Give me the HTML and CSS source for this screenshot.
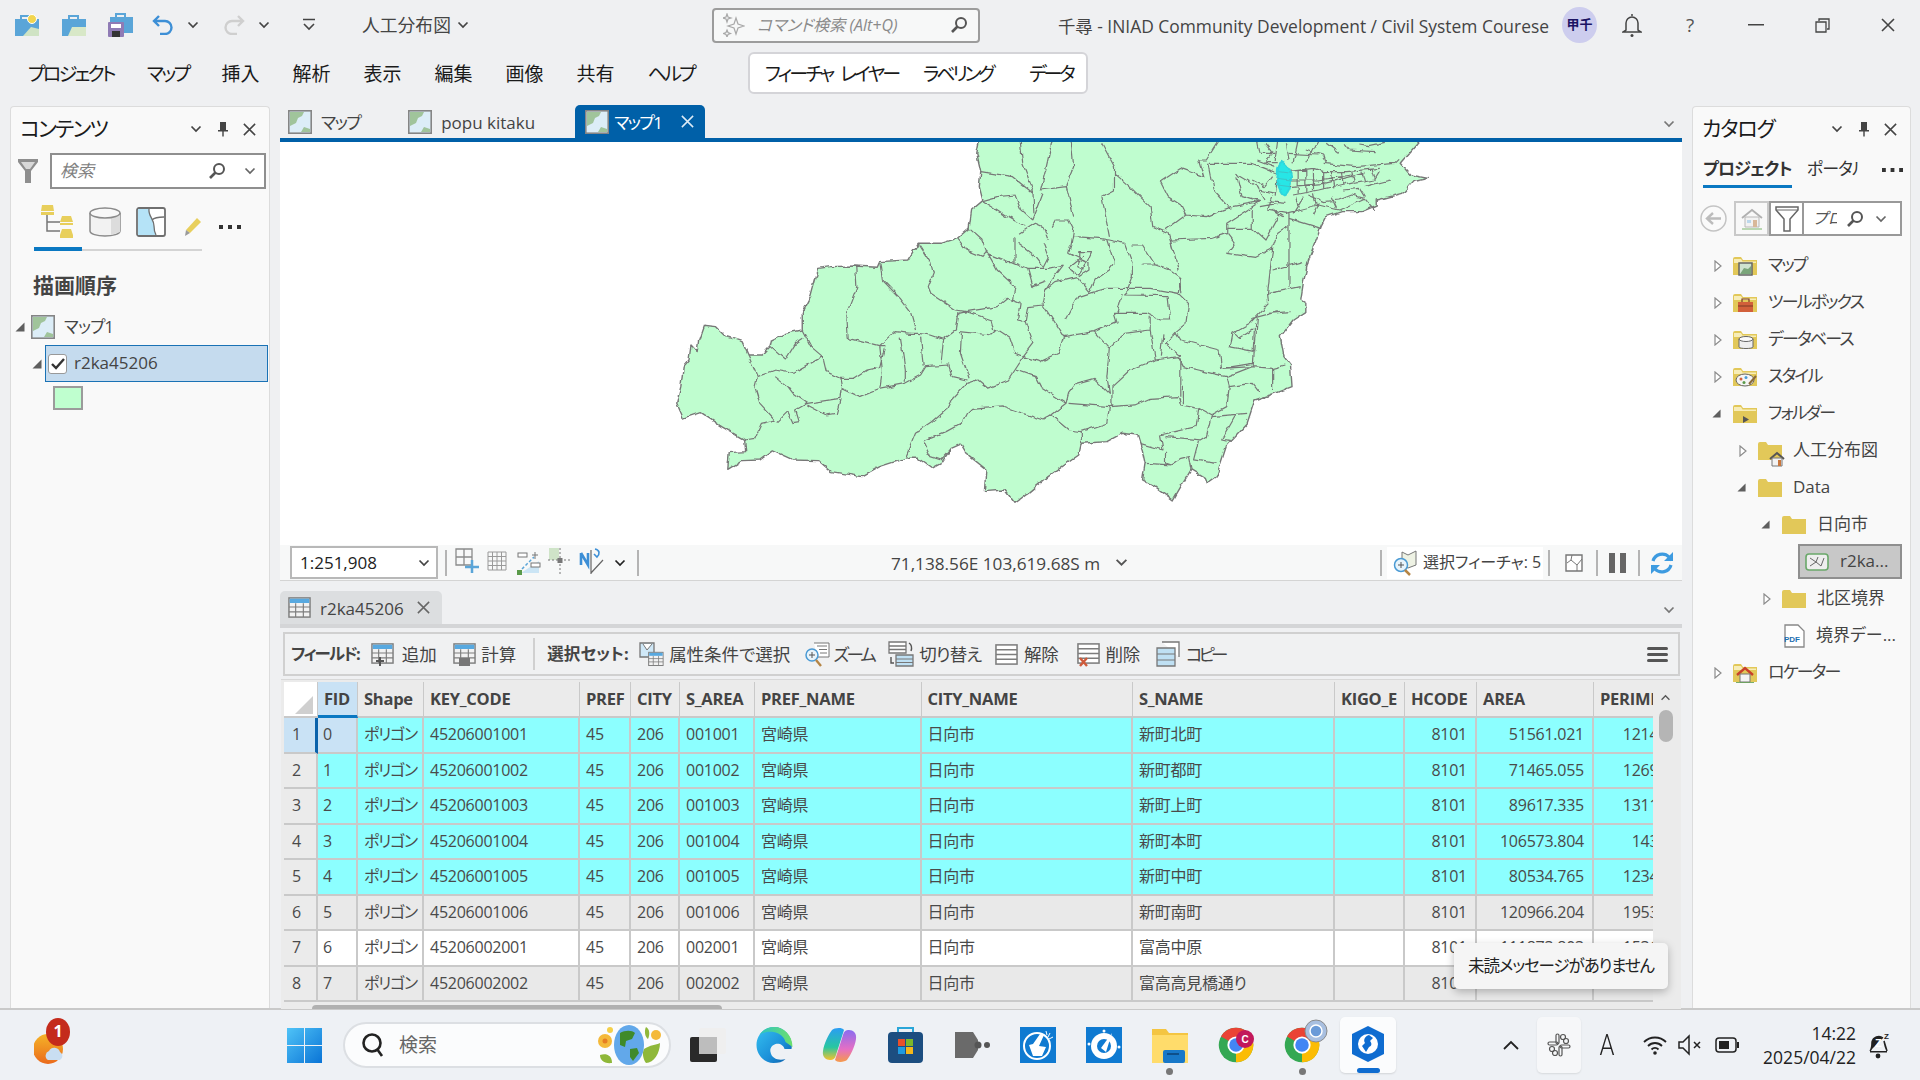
FILE: index.html
```html
<!DOCTYPE html>
<html lang="ja">
<head>
    <meta charset="utf-8">
    <title>ArcGIS Pro</title>
    <link rel="stylesheet" href="styles.css">
</head>
<body>
    <svg class="sprite" xmlns="http://www.w3.org/2000/svg">
        <defs>
            <linearGradient id="g-edge" x1="0" y1="0" x2="1" y2="1"><stop offset="0" stop-color="#35c1f1"/><stop offset=".6" stop-color="#1b8fd8"/><stop offset="1" stop-color="#0c59a4"/></linearGradient>
            <linearGradient id="g-edge2" x1="0" y1="0" x2="1" y2="0"><stop offset="0" stop-color="#2fc4c0"/><stop offset="1" stop-color="#6ce06c"/></linearGradient>
            <linearGradient id="g-win" x1="0" y1="0" x2="1" y2="1"><stop offset="0" stop-color="#4fc3f7"/><stop offset="1" stop-color="#0a74d6"/></linearGradient>
            <linearGradient id="g-co1" x1="0" y1="0" x2="0" y2="1"><stop offset="0" stop-color="#2a9df4"/><stop offset=".6" stop-color="#28c7a0"/><stop offset="1" stop-color="#f6c22c"/></linearGradient>
            <linearGradient id="g-co2" x1="0" y1="0" x2="0" y2="1"><stop offset="0" stop-color="#8a6cf0"/><stop offset=".6" stop-color="#e56fc4"/><stop offset="1" stop-color="#f59a4a"/></linearGradient>
            <linearGradient id="g-sun" x1="0" y1="0" x2="0" y2="1"><stop offset="0" stop-color="#f5b428"/><stop offset="1" stop-color="#ea6a1c"/></linearGradient>
            <filter id="wiggle" filterUnits="userSpaceOnUse" x="0" y="0" width="1402" height="403" color-interpolation-filters="sRGB"><feTurbulence type="fractalNoise" baseFrequency=".11" numOctaves="2" seed="4" result="n"/><feDisplacementMap in="SourceGraphic" in2="n" scale="5" xChannelSelector="R" yChannelSelector="G"/></filter>
        </defs>
        <symbol id="chev" viewBox="0 0 12 8"><path d="M1.5 1.5 6 6l4.5-4.5" fill="none" stroke="currentColor" stroke-width="1.7"/></symbol>
        <symbol id="x" viewBox="0 0 16 16"><path d="M2 2l12 12M14 2 2 14" fill="none" stroke="currentColor" stroke-width="1.6"/></symbol>
        <symbol id="pin" viewBox="0 0 12 16"><path d="M3 1h6v8H3zM1 9h10v1.4H1zM5.3 10h1.4v5.5H5.3z" fill="currentColor"/></symbol>
        <symbol id="mag" viewBox="0 0 18 18"><circle cx="11" cy="7" r="5" fill="none" stroke="currentColor" stroke-width="2"/><path d="M7.5 10.5 2 16" stroke="currentColor" stroke-width="2.6"/></symbol>
        <symbol id="tri-open" viewBox="0 0 10 10"><path d="M9.5.5v9h-9z" fill="#5f5f5f"/></symbol>
        <symbol id="tri-closed" viewBox="0 0 8 12"><path d="M1 1l6 5-6 5z" fill="#fff" stroke="#8c8c8c" stroke-width="1.2"/></symbol>
        <symbol id="map" viewBox="0 0 24 24"><rect x=".8" y=".8" width="22.4" height="22.4" fill="#dcedf7" stroke="#858585" stroke-width="1.6"/><path d="M2 2h14l-2 4-4 2-2 5-6 3z M13 22l3-5 3 1 3 1v3z" fill="#a0c49b"/></symbol>
        <symbol id="folder" viewBox="0 0 24 20"><path d="M0 3Q0 1 2 1h6l2 3h14v15H0z" fill="#e2c859"/><path d="M1 3h7l1.500 2.500H23V7H1z" fill="#f7edb8"/></symbol>
        <symbol id="plain-folder" viewBox="0 0 24 20"><path d="M0 3Q0 1 2 1h6l2 3h14v15H0z" fill="#e2c859"/></symbol>
        <symbol id="table" viewBox="0 0 24 24"><rect x="1" y="2" width="22" height="20" fill="#f2f2f2" stroke="#7d7d7d" stroke-width="1.500"/><rect x="1.800" y="2.800" width="20.400" height="4.500" fill="#58a9e0"/><path d="M1 11.500h22M1 16.500h22M8 7.500V22M16 7.500V22" stroke="#7d7d7d" stroke-width="1.200"/></symbol>
        <symbol id="rows" viewBox="0 0 24 24"><rect x="1" y="2" width="22" height="20" fill="#fff" stroke="#7d7d7d" stroke-width="1.600"/><path d="M1 7h22M1 12h22M1 17h22" stroke="#7d7d7d" stroke-width="1.500"/></symbol>
        <symbol id="dots" viewBox="0 0 22 4"><path d="M0 0h4v4H0zM9 0h4v4H9zM18 0h4v4h-4z" fill="#333"/></symbol>
        <symbol id="chrome" viewBox="0 0 48 48"><circle cx="24" cy="24" r="23" fill="#34a853"/><path d="M24 24 4 12.500A23 23 0 0 1 44 12.500z" fill="#ea4335"/><path d="M24 24 44 12.500A23 23 0 0 1 24 47z" fill="#fbbc04"/><circle cx="24" cy="24" r="11.500" fill="#fff"/><circle cx="24" cy="24" r="9" fill="#4285f4"/></symbol>
    </svg>

    <div class="window">
        <header class="titlebar">
            <div class="quick">
                <svg width="24" height="22" viewBox="0 0 24 22"><rect y="5" width="24" height="17" fill="#5aa5d8"/><path d="M6 5V2h8v3" fill="none" stroke="#5aa5d8" stroke-width="2"/><path d="M8 22l8-9 8 2v7z" fill="#cfe3c4"/><circle cx="17" cy="5" r="4.500" fill="#f2d54e" stroke="#fff"/></svg>
                <svg class="q-open" width="24" height="22" viewBox="0 0 24 22"><rect y="5" width="24" height="17" fill="#5aa5d8"/><path d="M7 5V2h9v3" fill="none" stroke="#5aa5d8" stroke-width="2"/><path d="M6 22l4-9h14v9z" fill="#d8e8c8"/></svg>
                <svg class="q-save" width="25" height="24" viewBox="0 0 25 24"><rect x="2" y="4" width="23" height="16" fill="#5aa5d8"/><path d="M8 4V1h9v3" fill="none" stroke="#5aa5d8" stroke-width="2"/><rect y="9" width="16" height="15" rx="1" fill="#8f7bb5"/><rect x="3" y="11" width="10" height="4" fill="#fff"/><rect x="4" y="18" width="8" height="6" fill="#333"/></svg>
                <svg class="q-undo" width="22" height="20" viewBox="0 0 22 20"><path d="M7 1 2 6l5 5M2 6h11a6.500 6.500 0 0 1 0 13H8" fill="none" stroke="#3d8fd6" stroke-width="2.400"/></svg>
                <svg class="q-chev" width="12" height="8"><use href="#chev"/></svg>
                <svg class="q-redo" width="22" height="20" viewBox="0 0 22 20"><path d="M15 1l5 5-5 5M20 6H9a6.500 6.500 0 0 0 0 13h5" fill="none" stroke="#cfcfcf" stroke-width="2.400"/></svg>
                <svg class="q-chev" width="12" height="8"><use href="#chev"/></svg>
                <svg class="q-custom" width="14" height="14" viewBox="0 0 14 14"><path d="M1 1.500h12M2 6l5 5 5-5" fill="none" stroke="#444" stroke-width="1.600"/></svg>
            </div>
            <div class="project-name">人工分布図</div>
            <svg class="q-name-chev" width="12" height="8"><use href="#chev"/></svg>
            <div class="command">
                <svg width="22" height="24" viewBox="0 0 22 24"><path d="M13 5l2 6 6 2-6 2-2 6-2-6-6-2 6-2zM4 1l1 3 3 1-3 1-1 3-1-3-3-1 3-1zM4 17l1 2.500 2.500 1-2.500 1L4 24l-1-2.500-2.500-1 2.500-1z" fill="none" stroke="#a8a8a8" stroke-width="1.200"/></svg>
                <span class="command-text">コマンド検索 (Alt+Q)</span>
                <svg class="command-mag" width="18" height="18"><use href="#mag"/></svg>
            </div>
            <div class="app-title">千尋 - INIAD Community Development / Civil System Courese</div>
            <div class="avatar">甲千</div>
            <svg class="win-bell" width="20" height="24" viewBox="0 0 20 24"><path d="M10 1v2M4 17V10a6 6 0 0 1 12 0v7l3 2H1z" fill="none" stroke="#444" stroke-width="1.500"/><circle cx="10" cy="22.500" r="1.500" fill="#444"/></svg>
            <div class="help">?</div>
            <svg class="win-min" width="16" height="2"><rect width="16" height="1.500" fill="#444"/></svg>
            <svg class="win-max" width="15" height="15" viewBox="0 0 15 15"><path d="M4 3V1h10v10h-2M1 4h10v10H1z" fill="none" stroke="#444" stroke-width="1.300"/></svg>
            <svg class="win-close" width="16" height="16"><use href="#x"/></svg>
        </header>

        <nav class="ribbon">
            <span class="kn">プロジェクト</span><span class="kn">マップ</span><span>挿入</span><span>解析</span><span>表示</span><span>編集</span><span>画像</span><span>共有</span><span class="kn">ヘルプ</span>
            <div class="context-tabs"><span class="kn ct1">フィーチャ レイヤー</span><span class="kn ct2">ラベリング</span><span class="kn ct3">データ</span></div>
        </nav>

        <div class="workspace">
            <aside class="panel contents">
                <div class="panel-head">
                    <span class="panel-title">コンテンツ</span>
                    <svg class="ph-chev" width="12" height="8"><use href="#chev"/></svg>
                    <svg class="ph-pin" width="12" height="16"><use href="#pin"/></svg>
                    <svg class="ph-x" width="15" height="15"><use href="#x"/></svg>
                </div>
                <div class="filter-row">
                    <svg width="20" height="24" viewBox="0 0 20 24"><path d="M0 0h20v3l-7 9v12H7V12L0 3z" fill="#8e8e8e"/><path d="M3 3h14l-5 7H8z" fill="#d8d8d8"/></svg>
                    <div class="search-box">
                        <span class="search-text">検索</span>
                        <svg class="sb-mag" width="18" height="18"><use href="#mag"/></svg>
                        <svg class="sb-chev" width="12" height="8"><use href="#chev"/></svg>
                    </div>
                </div>
                <div class="view-icons">
                    <svg width="34" height="33" viewBox="0 0 34 33"><path d="M7 8v18h13M7 17h13" fill="none" stroke="#777" stroke-width="1.500"/><path d="M2 0h11l1 6H1zM1 7h13v3H1z" fill="#e8cf5c"/><path d="M22 11h9l2 6H20zM20 18h13v2H20zM22 24h9l2 6H20zM20 30h13v3H20z" fill="#e8cf5c"/></svg>
                    <svg width="32" height="30" viewBox="0 0 32 30"><path d="M1 6v18c0 3 7 5 15 5s15-2 15-5V6" fill="#f2f2f2" stroke="#8a8a8a" stroke-width="1.500"/><path d="M22 10v18l9-3V6z" fill="#dcdcdc"/><ellipse cx="16" cy="6" rx="15" ry="5" fill="#f8f8f8" stroke="#8a8a8a" stroke-width="1.500"/></svg>
                    <svg width="30" height="30" viewBox="0 0 30 30"><rect x="1" y="1" width="28" height="28" rx="2" fill="#fff" stroke="#6f6f6f" stroke-width="1.800"/><path d="M2 2h11c-1 7 5 10 5 17 0 4 1 7 2 9H2z" fill="#b5e3f7"/><path d="M13 2c-1 7 5 10 5 17 0 4 1 7 2 9M16 13c3-3 8-3 12-3" fill="none" stroke="#6f6f6f" stroke-width="1.300"/></svg>
                    <svg class="vi-pencil" width="16" height="18" viewBox="0 0 16 18"><path d="M12 0l4 4L5 15l-4-3z" fill="#e8cf5c"/><path d="M1 12l4 3-5 3z" fill="#9a9a9a"/></svg>
                    <svg class="vi-dots" width="22" height="4"><use href="#dots"/></svg>
                </div>
                <div class="view-tabs"><div class="view-tabs-on"></div></div>
                <h2 class="drawing-order">描画順序</h2>
                <div class="toc-row">
                    <svg class="toc-tri" width="10" height="10"><use href="#tri-open"/></svg>
                    <svg class="toc-map" width="24" height="24"><use href="#map"/></svg>
                    <span>マップ1</span>
                </div>
                <div class="toc-row layer-row">
                    <svg class="layer-tri" width="10" height="10"><use href="#tri-open"/></svg>
                    <div class="layer-box">
                        <div class="check"><svg width="14" height="12" viewBox="0 0 14 12"><path d="M1 6l4 4 8-9" fill="none" stroke="#333" stroke-width="2.400"/></svg></div>
                        <span>r2ka45206</span>
                    </div>
                </div>
                <div class="layer-symbol"></div>
            </aside>

            <main class="center">
                <div class="doc-tabs">
                    <div class="doc-tab"><svg width="24" height="24"><use href="#map"/></svg><span class="kn">マップ</span></div>
                    <div class="doc-tab tab-popu"><svg width="24" height="24"><use href="#map"/></svg><span>popu kitaku</span></div>
                    <div class="doc-tab tab-active"><svg width="24" height="24"><use href="#map"/></svg><span class="kn">マップ1</span><svg class="tab-x" width="15" height="15"><use href="#x"/></svg></div>
                    <svg class="tabs-chev" width="12" height="8"><use href="#chev"/></svg>
                </div>

                <div class="map-view">
                    <svg class="map-svg" viewBox="0 0 1402 403">
                        <g filter="url(#wiggle)">
                        <g transform="translate(360 -12) scale(.5102 .3333)">
                            <path class="land" d="M665 30 660 70 668 125 665 170 672 212 650 240 645 295 622 325 590 340 545 340 525 390 470 395 465 412 420 408 375 410 350 415 335 500 318 550 318 600 285 610 258 630 255 650 240 675 212 675 200 635 170 620 150 590 125 586 115 630 112 665 100 645 96 690 85 710 80 770 72 820 85 865 118 848 160 890 205 930 207 965 175 968 172 1018 200 992 235 990 260 962 300 990 350 992 375 1025 435 1040 470 1010 520 985 545 985 572 1015 590 1000 610 955 630 942 645 980 678 1020 675 1085 715 1080 735 1120 765 1085 800 1040 860 975 865 940 915 935 945 910 975 915 985 965 990 1000 985 1050 1010 1070 1045 1110 1060 1070 1080 1020 1108 1045 1112 1060 1130 1040 1150 945 1190 880 1205 810 1235 795 1278 770 1275 705 1262 680 1255 620 1270 590 1280 570 1305 545 1305 520 1295 510 1300 460 1310 390 1335 290 1345 260 1375 245 1415 245 1445 225 1445 210 1495 190 1515 155 1545 145 1510 135 1490 100 1530 30z"/>
                            <path class="borders" d="M745 30 750 100 770 180 772 250M808 30 795 120 785 180M845 30 850 110 835 165 850 260M905 40 930 110 930 180 905 200 920 320M668 125 730 140 770 190M672 212 700 200 735 195 745 235 770 270M672 212 720 260 755 290M785 180 835 170M770 270 790 190M930 130 960 170 1000 230 1005 290 1035 310 1045 360 1055 420M1135 30 1110 90 1095 90 1105 140 1060 115 1020 155 1035 200 1060 225 1070 255 1030 300M1110 100 1200 100 1250 130M1115 100 1125 180 1160 240M1070 255 1110 260 1160 230 1215 215M1040 330 1120 325 1150 310 1165 340 1150 370 1205 382 1240 355M1215 215 1150 280 1150 310M1150 295 1200 295 1225 330 1250 260M1240 355 1230 490 1232 520 1195 580 1160 610 1155 650 1205 665M1272 250V470M1272 265 1335 295M1240 420 1300 395M1232 490 1295 470M1232 550 1275 545M1205 580 1200 710 1140 715 1135 660 1060 630 1050 605 1070 580 1075 520 1055 490 1060 440M1040 330 1045 360M645 295 670 330 680 370 720 395 730 395 760 415 800 415 830 405M622 325 640 360 672 380 680 365 700 420 735 470 730 510 745 520 720 505 700 530 640 545M545 340 570 400 575 430 565 470 570 490 620 540 640 545M470 395 475 450 510 505 530 545 540 600M423 410 425 470 405 550 408 625 470 650M318 600 335 650 358 680 365 725 392 745 420 745 445 720 470 712 480 650 470 650 500 605 530 610 545 610 570 615 595 628 620 600 625 550 640 545M212 675 230 740 265 720 300 730 358 680M255 650 285 690 305 640 320 625M230 740 225 770 235 820 265 870 238 880 225 925 205 930M265 740 290 770 300 790 328 820 392 805 395 770 392 745M328 820 305 840 312 875 300 878 290 845 270 875M328 825 365 855 385 850 392 810M395 775 430 800 470 775 520 760 550 735 560 710 605 705 612 740 640 750M470 650 475 720 470 775M510 620 520 720 520 755M550 620 555 710M595 628 590 700M630 610 628 670 645 745M625 605 690 615 700 600 725 625 735 670 752 680 735 720 722 750 690 770 680 775 660 750 640 760 610 810 600 840 570 880 540 910 520 985M640 545 690 570 695 600M755 575 770 640 750 680 785 695 820 670 830 620M745 520 740 570 755 575 760 530 790 525 795 480 815 455 855 440 880 485M790 525 830 620 890 605 920 655 915 740 920 790 890 745 855 760 840 790 835 820 785 770 775 740 738 720M880 490 915 475 1000 475 1055 490M835 570 860 500 880 490M890 605 935 575 930 550 995 550 1020 570 1040 570 1035 500M960 480 950 495 1035 497M945 495 935 550M920 655 950 610 1000 600 1010 690 960 720 925 770 925 830M1000 600V560M1010 690 1055 680 1065 710 1150 740 1155 770 1150 830 1120 855 1095 835 1060 825 1055 800 1000 805 970 825 920 830 840 820M1060 685V800M1065 770V820M1025 610 1020 680M1050 605 1030 640 1060 680M1135 660 1140 715 1200 700M1150 740 1200 710 1240 715 1265 705M1155 770 1200 760 1215 790M1240 715V780M640 850 650 835 710 828 750 850 790 870 805 855 835 820M640 850 630 880 600 905 555 932 570 980 590 990 610 955M805 855 840 900 865 905 915 880 920 830M865 905V940M1095 835 1090 890 1020 915 1025 960 980 940M1120 855 1110 920 1100 930 1030 920M1170 850 1140 930 1155 935M1120 860 1190 850M1095 930 1085 990 1130 1000M1030 965 1030 1000 1040 1005 1060 985 1075 980 1080 1020M990 1000 1040 1005M735 320V400M740 340 775 380 790 410 800 380 790 340M745 310 775 280 790 290 800 330M808 290 815 270 840 270 850 300 845 345 840 370M850 320 900 325 920 330 950 340 965 400 965 440 955 480M840 370 880 400 880 420 860 440M915 330 930 400 920 420 890 450 880 485M965 345 985 345 1010 405 1040 420 1058 440 1060 490M985 405H1015M760 415 770 470 795 455M830 405 810 445 795 480M860 365H885L875 400 860 435 840 415 860 390zM868 375 858 410 870 420M1210 565 1205 665M1165 610 1175 625 1200 600M1240 355 1250 310 1270 290M1200 240V300M1200 565 1250 545M1250 30 1245 90M1290 30 1280 100M1330 30 1305 100M1210 30 1215 70 1245 70M1410 45 1430 50 1460 40M1340 100 1400 110 1480 100 1490 85M1165 130 1210 170 1225 210M1170 140 1180 200 1215 215M1270 125 1320 115 1340 125 1385 125 1450 115M1275 150 1330 150 1395 135M1275 170 1340 160 1420 130M1280 195 1330 180 1400 155M1290 120V190M1305 115V190M1320 115V180M1340 125V175M1355 125 1360 175M1375 125 1378 165M1395 125 1400 155M1415 125 1420 155M1435 118 1440 145M1240 200 1230 240 1265 250 1330 225 1370 240 1420 205 1395 195 1370 210 1340 215 1310 195M1285 200 1290 230M1320 190 1325 225M1355 200 1365 235M1230 215 1265 220M1250 130 1245 200M1225 40 1240 70 1225 95 1250 95M1265 40 1270 90M1305 60 1340 75 1345 100M1345 40 1370 70M1380 40 1390 60 1440 65M1210 90 1245 110M1270 70 1330 75M1200 150 1225 170 1240 140M1215 180 1245 190M1400 160 1440 150 1450 125M1420 170 1470 150M1380 180 1410 175 1420 200M1420 205 1440 240M1330 225 1320 255M1300 200 1280 250M1215 230 1250 220M1240 240 1260 260"/>
                            <path class="selected" d="M1258 95C1268 100 1275 120 1276 140 1277 165 1272 190 1264 196 1255 190 1247 160 1250 130 1250 110 1252 100 1258 95z"/>
                            <path class="selected-lines" d="M1252 125 1276 130M1250 145 1276 150M1250 165 1274 170"/>
                        </g>
                        </g>
                    </svg>
                </div>

                <div class="map-status">
                    <div class="scale-box"><span>1:251,908</span><svg width="12" height="8"><use href="#chev"/></svg></div>
                    <div class="ms-sep"></div>
                    <svg class="ms-i1" width="24" height="26" viewBox="0 0 24 26"><path d="M1 1h16v16H1zM1 9h16M9 1v16" fill="none" stroke="#8a8a8a" stroke-width="1.300"/><path d="M17 12v13M10 19h14" stroke="#5aa5d8" stroke-width="2.500"/></svg>
                    <svg class="ms-i2" width="20" height="20" viewBox="0 0 20 20"><path d="M1 1h18v18H1zM1 5.500h18M1 10h18M1 14.500h18M5.500 1v18M10 1v18M14.500 1v18" fill="none" stroke="#9a9a9a" stroke-width="1"/></svg>
                    <svg class="ms-i3" width="24" height="24" viewBox="0 0 24 24"><path d="M4 22 22 10v12z" fill="#cbe5f5"/><path d="M5 18 17 6" stroke="#5aa5d8" stroke-width="1.500" stroke-dasharray="3 2"/><rect y="19" width="5" height="5" fill="#5a9a4a"/><rect x="1" y="2" width="9" height="4" fill="#fff" stroke="#777"/><rect x="14" y="12" width="9" height="4" fill="#fff" stroke="#777"/><path d="M18 1v7M15 4h6" stroke="#777"/></svg>
                    <svg class="ms-i4" width="24" height="26" viewBox="0 0 24 26"><rect x="1" y="0" width="10" height="12" fill="#cfe4c8"/><path d="M0 12h24M12 0v26" stroke="#777" stroke-dasharray="2 2"/><rect x="9.500" y="10" width="5" height="5" fill="#777"/></svg>
                    <svg class="ms-i5" width="25" height="26" viewBox="0 0 25 26"><path d="M2 5v12M2 5l7 12V5" fill="none" stroke="#3d8fd6" stroke-width="2.600"/><path d="M12 2v24M12 25 24 12" stroke="#666" stroke-width="1.200"/><path d="M16 1c5 1 5 5 2 8l-3-3" fill="none" stroke="#3d8fd6" stroke-width="1.600"/></svg>
                    <svg class="ms-chev" width="12" height="8"><use href="#chev"/></svg>
                    <div class="ms-sep ms-sep2"></div>
                    <span class="coords">71,138.56E 103,619.68S m</span>
                    <svg class="coords-chev" width="13" height="9"><use href="#chev"/></svg>
                    <div class="ms-sep ms-sep3"></div>
                    <div class="selected-count">
                        <svg width="24" height="26" viewBox="0 0 24 26"><path d="M9 2l6 3 8-4v14l-8 3-6-3z" fill="#eef2e4" stroke="#777"/><circle cx="8" cy="15" r="6.500" fill="#e8f4fb" stroke="#4a9ad4" stroke-width="1.500"/><path d="M5 15h6M8 12v6" stroke="#555"/><path d="M12 20l5 5" stroke="#b58545" stroke-width="2.500"/></svg>
                        <span>選択フィーチャ: 5</span>
                    </div>
                    <div class="ms-sep ms-sep4"></div>
                    <svg class="ms-i6" width="18" height="18" viewBox="0 0 18 18"><path d="M1 1h16v16H1z" fill="#fff" stroke="#777" stroke-width="1.400"/><path d="M7 1 6 6l6 5v6M6 6 2 9M12 11l5-6" fill="none" stroke="#777"/></svg>
                    <div class="ms-sep ms-sep5"></div>
                    <svg class="ms-pause" width="17" height="20"><rect width="6" height="20" fill="#666"/><rect x="11" width="6" height="20" fill="#666"/></svg>
                    <div class="ms-sep ms-sep6"></div>
                    <svg class="ms-refresh" width="24" height="24" viewBox="0 0 24 24"><path d="M3 10a9.500 9.500 0 0 1 16-4l3 3M21 14a9.500 9.500 0 0 1-16 4l-3-3" fill="none" stroke="#3d9be0" stroke-width="3.200"/><path d="M23 1v9h-9zM1 23v-9h9z" fill="#3d9be0"/></svg>
                </div>

                <div class="table-tabs">
                    <div class="table-tab"><svg width="23" height="23"><use href="#table"/></svg><span>r2ka45206</span><svg class="tab-x" width="15" height="15"><use href="#x"/></svg></div>
                    <svg class="tabs-chev" width="12" height="8"><use href="#chev"/></svg>
                </div>

                <div class="table-tools">
                    <b class="kn">フィールド:</b>
                    <svg class="tt-i1" width="23" height="25"><use href="#table" width="23" height="23"/><path d="M5 19h8M9 15v9" stroke="#555" stroke-width="2"/></svg><span class="tt-add">追加</span>
                    <svg class="tt-i2" width="23" height="25"><use href="#table" width="23" height="23"/><rect x="6" y="16" width="11" height="8" fill="#777"/></svg><span>計算</span>
                    <div class="tt-sep"></div>
                    <b>選択セット:</b>
                    <svg class="tt-i3" width="25" height="25" viewBox="0 0 25 25"><path d="M1 1h14v14H1z" fill="#cfe8f7" stroke="#777" stroke-width="1.300"/><path d="M4 2l4 6 5-6" fill="#fff" stroke="#777"/><g transform="translate(9 9) scale(.66)"><use href="#table" width="24" height="24"/></g></svg><span>属性条件で選択</span>
                    <svg class="tt-i4" width="25" height="25" viewBox="0 0 25 25"><path d="M9 1h15v14H12" fill="#fff" stroke="#777"/><path d="M12 4h10M14 7.500h8M15 11h7" stroke="#777"/><circle cx="7" cy="13" r="6" fill="#e8f4fb" stroke="#4a9ad4" stroke-width="1.500"/><path d="M4 13h6M7 10v6" stroke="#555"/><path d="M11 18l5 6" stroke="#b58545" stroke-width="2.400"/></svg><span class="kn tt-zoom">ズーム</span>
                    <svg class="tt-i5" width="26" height="26" viewBox="0 0 26 26"><path d="M1 1h17v11H1zM1 5h17M1 8.500h17" fill="#fff" stroke="#777" stroke-width="1.300"/><path d="M8 14h17v11H8z" fill="#bfe0f3" stroke="#777" stroke-width="1.300"/><path d="M8 18h17M8 21.500h17" stroke="#777"/><path d="M21 2c3 2 3 5 2 8M3 16v6h3" fill="none" stroke="#555" stroke-width="1.400"/></svg><span class="tt-switch">切り替え</span>
                    <svg class="tt-i6" width="23" height="23"><use href="#rows"/></svg><span>解除</span>
                    <svg class="tt-i7" width="23" height="25"><use href="#rows" width="23" height="23"/><path d="M3 16l7 8M10 16l-7 8" stroke="#cf5a3a" stroke-width="2.400"/></svg><span>削除</span>
                    <svg class="tt-i8" width="24" height="26" viewBox="0 0 24 26"><path d="M6 1h17v15" fill="#fff" stroke="#777" stroke-width="1.300"/><path d="M1 7h18v18H1z" fill="#bfe0f3" stroke="#777" stroke-width="1.300"/><path d="M1 13h18M1 19h18" stroke="#777"/></svg><span class="kn tt-copy">コピー</span>
                    <div class="hamburger"><i></i><i></i><i></i></div>
                </div>

                <div class="table-area">
                    <div class="grid-row">
                        <div class="grid-clip">
                            <table class="attr">
                                <colgroup>
                                    <col class="c-rh"><col class="c-fid"><col class="c-shape"><col class="c-key"><col class="c-pref"><col class="c-city"><col class="c-sarea"><col class="c-pname"><col class="c-cname"><col class="c-sname"><col class="c-kigo"><col class="c-hcode"><col class="c-area"><col class="c-perim">
                                </colgroup>
                                <thead>
                                    <tr><th class="corner"><svg width="20" height="20" viewBox="0 0 20 20"><path d="M19 1v18H1z" fill="#cfcfcf"/></svg></th><th class="fid-head">FID</th><th>Shape</th><th>KEY_CODE</th><th>PREF</th><th>CITY</th><th>S_AREA</th><th>PREF_NAME</th><th>CITY_NAME</th><th>S_NAME</th><th>KIGO_E</th><th>HCODE</th><th>AREA</th><th>PERIMETER</th></tr>
                                </thead>
                                <tbody>
                                    <tr class="sel"><th class="rh rh-on">1</th><td class="fid-on">0</td><td class="shape">ポリゴン</td><td>45206001001</td><td>45</td><td>206</td><td>001001</td><td>宮崎県</td><td>日向市</td><td>新町北町</td><td></td><td class="num">8101</td><td class="num">51561.021</td><td class="num">1214.712</td></tr>
                                    <tr class="sel"><th class="rh">2</th><td>1</td><td class="shape">ポリゴン</td><td>45206001002</td><td>45</td><td>206</td><td>001002</td><td>宮崎県</td><td>日向市</td><td>新町都町</td><td></td><td class="num">8101</td><td class="num">71465.055</td><td class="num">1269.304</td></tr>
                                    <tr class="sel"><th class="rh">3</th><td>2</td><td class="shape">ポリゴン</td><td>45206001003</td><td>45</td><td>206</td><td>001003</td><td>宮崎県</td><td>日向市</td><td>新町上町</td><td></td><td class="num">8101</td><td class="num">89617.335</td><td class="num">1311.586</td></tr>
                                    <tr class="sel"><th class="rh">4</th><td>3</td><td class="shape">ポリゴン</td><td>45206001004</td><td>45</td><td>206</td><td>001004</td><td>宮崎県</td><td>日向市</td><td>新町本町</td><td></td><td class="num">8101</td><td class="num">106573.804</td><td class="num">1433.12</td></tr>
                                    <tr class="sel"><th class="rh">5</th><td>4</td><td class="shape">ポリゴン</td><td>45206001005</td><td>45</td><td>206</td><td>001005</td><td>宮崎県</td><td>日向市</td><td>新町中町</td><td></td><td class="num">8101</td><td class="num">80534.765</td><td class="num">1234.905</td></tr>
                                    <tr class="alt"><th class="rh">6</th><td>5</td><td class="shape">ポリゴン</td><td>45206001006</td><td>45</td><td>206</td><td>001006</td><td>宮崎県</td><td>日向市</td><td>新町南町</td><td></td><td class="num">8101</td><td class="num">120966.204</td><td class="num">1953.227</td></tr>
                                    <tr><th class="rh">7</th><td>6</td><td class="shape">ポリゴン</td><td>45206002001</td><td>45</td><td>206</td><td>002001</td><td>宮崎県</td><td>日向市</td><td>富高中原</td><td></td><td class="num">8101</td><td class="num">111873.803</td><td class="num">1531.446</td></tr>
                                    <tr class="alt"><th class="rh">8</th><td>7</td><td class="shape">ポリゴン</td><td>45206002002</td><td>45</td><td>206</td><td>002002</td><td>宮崎県</td><td>日向市</td><td>富高高見橋通り</td><td></td><td class="num">8101</td><td class="num">98231.640</td><td class="num">1482.310</td></tr>
                                </tbody>
                            </table>
                        </div>
                        <div class="v-scroll">
                            <svg class="vs-up" width="11" height="7" viewBox="0 0 12 8"><path d="M1.500 6.500 6 2l4.500 4.500" fill="none" stroke="#555" stroke-width="1.500"/></svg>
                            <div class="vs-thumb"></div>
                        </div>
                    </div>
                    <div class="h-scroll"></div>
                    <div class="toast">未読メッセージがありません</div>
                </div>
            </main>

            <aside class="panel catalog">
                <div class="panel-head">
                    <span class="panel-title">カタログ</span>
                    <svg class="ph-chev" width="12" height="8"><use href="#chev"/></svg>
                    <svg class="ph-pin" width="12" height="16"><use href="#pin"/></svg>
                    <svg class="ph-x" width="15" height="15"><use href="#x"/></svg>
                </div>
                <div class="cat-tabs">
                    <span class="cat-tab-on">プロジェクト</span>
                    <span class="cat-tab-off">ポータル</span>
                    <svg class="cat-dots" width="21" height="4"><use href="#dots"/></svg>
                </div>
                <div class="cat-tools">
                    <svg class="cat-back" width="27" height="27" viewBox="0 0 27 27"><circle cx="13.500" cy="13.500" r="12.500" fill="#fafafa" stroke="#c4c4c4" stroke-width="1.500"/><path d="M21 13.500H8M13 8l-6 5.500 6 5.500" fill="none" stroke="#bcbcbc" stroke-width="2.400"/></svg>
                    <div class="cat-btn cat-home"><svg width="22" height="22" viewBox="0 0 22 22"><path d="M1 10 11 2l10 8" fill="none" stroke="#b0b0b0" stroke-width="1.800"/><path d="M4 9h14v10H4z" fill="#f2f2f2" stroke="#b8b8b8"/><rect x="12" y="12" width="4" height="7" fill="#d8b89a"/><rect x="6" y="12" width="4" height="3" fill="#bcd8ec"/><path d="M1 21h20" stroke="#a9cfa0" stroke-width="1.600"/></svg></div>
                    <div class="cat-btn cat-filter"><svg width="24" height="26" viewBox="0 0 24 26"><path d="M1 1h22v3l-8 9v12H9V13L1 4z" fill="#fff" stroke="#666" stroke-width="1.500"/><path d="M1 4h22" stroke="#666"/></svg></div>
                    <div class="cat-search"><span>プロ</span><svg class="cs-mag" width="18" height="18"><use href="#mag"/></svg><svg class="cs-chev" width="12" height="8"><use href="#chev"/></svg></div>
                </div>
                <div class="cat-tree">
                    <div class="cat-row lvl0"><svg class="tri" width="8" height="12"><use href="#tri-closed"/></svg><svg class="fold" width="24" height="20"><use href="#folder"/><rect x="6" y="7" width="13" height="12" fill="#cfe3d0" stroke="#666" stroke-width="1.500"/><path d="M7 18l4-6 4 1 3-3v8z" fill="#7aa57a"/></svg><span class="kn">マップ</span></div>
                    <div class="cat-row lvl0"><svg class="tri" width="8" height="12"><use href="#tri-closed"/></svg><svg class="fold" width="24" height="20"><use href="#folder"/><rect x="5" y="9" width="15" height="10" fill="#d2603a"/><path d="M9 9V6h7v3M5 13h15" fill="none" stroke="#7a3a25" stroke-width="1.200"/></svg><span class="kn">ツールボックス</span></div>
                    <div class="cat-row lvl0"><svg class="tri" width="8" height="12"><use href="#tri-closed"/></svg><svg class="fold" width="24" height="20"><use href="#folder"/><path d="M6 9v8c0 2 14 2 14 0V9z" fill="#eee" stroke="#666"/><ellipse cx="13" cy="9" rx="7" ry="2.500" fill="#fafafa" stroke="#666"/></svg><span class="kn">データベース</span></div>
                    <div class="cat-row lvl0"><svg class="tri" width="8" height="12"><use href="#tri-closed"/></svg><svg class="fold" width="24" height="20"><use href="#folder"/><ellipse cx="12" cy="13" rx="9" ry="6" fill="#f4f4f4" stroke="#666"/><circle cx="8" cy="12" r="1.500" fill="#d2603a"/><circle cx="13" cy="10.500" r="1.500" fill="#4a9ad4"/><circle cx="11" cy="15.500" r="1.500" fill="#5a9a4a"/><path d="M16 17l7-8" stroke="#8a6a3a" stroke-width="2"/></svg><span class="kn">スタイル</span></div>
                    <div class="cat-row lvl0 open"><svg class="tri" width="9" height="9"><use href="#tri-open"/></svg><svg class="fold" width="24" height="20"><use href="#folder"/><path d="M10 12v7l6-3.500z" fill="#555"/></svg><span class="kn">フォルダー</span></div>
                    <div class="cat-row lvl1"><svg class="tri" width="8" height="12"><use href="#tri-closed"/></svg><svg class="fold fold-home" width="28" height="26" viewBox="0 0 28 26"><use href="#plain-folder" width="24" height="20"/><path d="M12 18l7-6 7 6" fill="none" stroke="#555" stroke-width="2"/><path d="M14 17h10v8H14z" fill="#f2f2f2" stroke="#777"/><rect x="20" y="19" width="3" height="6" fill="#c9763c"/></svg><span>人工分布図</span></div>
                    <div class="cat-row lvl1 open"><svg class="tri" width="9" height="9"><use href="#tri-open"/></svg><svg class="fold" width="24" height="20"><use href="#plain-folder"/></svg><span>Data</span></div>
                    <div class="cat-row lvl2 open"><svg class="tri" width="9" height="9"><use href="#tri-open"/></svg><svg class="fold" width="24" height="20"><use href="#plain-folder"/></svg><span>日向市</span></div>
                    <div class="cat-row cat-selected"><svg width="24" height="18" viewBox="0 0 24 18"><rect x="1" y="1" width="22" height="16" rx="3" fill="#eee" stroke="#6aa86a" stroke-width="1.600"/><path d="M5 13l6-4 2-5M11 9l5 4 3-8M5 5l6 4" fill="none" stroke="#666"/></svg><span>r2ka...</span></div>
                    <div class="cat-row lvl2"><svg class="tri" width="8" height="12"><use href="#tri-closed"/></svg><svg class="fold" width="24" height="20"><use href="#plain-folder"/></svg><span>北区境界</span></div>
                    <div class="cat-row lvl2 no-tri"><svg class="pdf" width="21" height="24" viewBox="0 0 21 24"><path d="M1 1h13l6 6v16H1z" fill="#fff" stroke="#888" stroke-width="1.300"/><text x="0" y="18" class="pdf-label">PDF</text></svg><span>境界デー...</span></div>
                    <div class="cat-row lvl0"><svg class="tri" width="8" height="12"><use href="#tri-closed"/></svg><svg class="fold" width="24" height="20"><use href="#folder"/><path d="M4 12 12 5l8 7" fill="none" stroke="#c8402a" stroke-width="2.400"/><path d="M7 11h10v8H7z" fill="#f4f4f4" stroke="#777"/><path d="M3 20h18" stroke="#5a9a4a" stroke-width="1.600"/></svg><span class="kn">ロケーター</span></div>
                </div>
            </aside>
        </div>
    </div>

    <footer class="taskbar">
        <div class="tb-weather">
            <svg width="32" height="32" viewBox="0 0 32 32"><circle cx="14" cy="16" r="15" fill="url(#g-sun)"/><path d="M14 27a5 5 0 0 1 1-9 6 6 0 0 1 11 1 4.500 4.500 0 0 1 0 8z" fill="#c9def2"/></svg>
            <div class="tb-badge">1</div>
        </div>
        <svg class="tb-win" width="35" height="35" viewBox="0 0 35 35"><path d="M0 0h17v17H0zM18 0h17v17H18zM0 18h17v17H0zM18 18h17v17H18z" fill="url(#g-win)"/></svg>
        <div class="tb-search">
            <svg width="24" height="26" viewBox="0 0 24 26"><circle cx="11" cy="11" r="8.500" fill="none" stroke="#222" stroke-width="2.600"/><path d="M16 17l5 7" stroke="#222" stroke-width="2.600"/></svg>
            <span>検索</span>
            <svg class="tb-globe" width="68" height="40" viewBox="0 0 68 40"><path d="M6 30c6-2 12 0 12 8-8 1-12-3-12-8zM50 24c6-4 12-4 16-6 0 10-6 20-14 20-3-4-4-10-2-14zM52 2c4 2 4 8 2 12-3-2-4-8-2-12z" fill="#8fb83a"/><circle cx="11" cy="16" r="7" fill="#f4b93a"/><circle cx="11" cy="16" r="2.500" fill="#e67e22"/><circle cx="62" cy="10" r="5" fill="#f4b93a"/><circle cx="16" cy="5" r="3" fill="#f4d04a"/><ellipse cx="35" cy="20" rx="15" ry="20" fill="#62a8ea"/><path d="M26 8c5-3 12-3 15 0l-3 6-6 2-1 6-5-2zM36 24l7-1 2 5-6 8-3-4z" fill="#3f8a2a"/></svg>
        </div>
        <svg class="tb-taskview" width="36" height="34" viewBox="0 0 36 34"><rect y="9" width="27" height="25" rx="2" fill="#2a2a2a"/><rect x="9" width="27" height="26" rx="2" fill="#efefef"/><rect x="9" y="9" width="18" height="17" fill="#bdbdbd"/></svg>
        <svg class="tb-edge" width="37" height="36" viewBox="0 0 36 36"><path d="M18 0C8 0 0 8 0 18c0 10 8 18 17 18 5 0 9-1 12-4-6 2-14 0-15-7-1-4 2-7 5-8 4-1 8 1 9 5h7c2-12-7-22-17-22z" fill="url(#g-edge)"/><path d="M36 20C36 8 27 0 18 0 10 0 5 4 3 8c4-3 9-4 14-3 6 1 11 5 12 10l7 5z" fill="url(#g-edge2)"/></svg>
        <svg class="tb-copilot" width="35" height="36" viewBox="0 0 35 36"><path d="M10 3c2-2 10-3 12 0l-8 25c-1 4-3 5-6 5-4 0-8-3-7-9 1-8 6-17 9-21z" fill="url(#g-co1)"/><path d="M25 33c-2 2-10 3-12 0l8-25c1-4 3-5 6-5 4 0 8 3 7 9-1 8-6 17-9 21z" fill="url(#g-co2)"/></svg>
        <svg class="tb-store" width="35" height="36" viewBox="0 0 35 36"><path d="M10 6V1h15v5" fill="none" stroke="#2aa6d8" stroke-width="2"/><rect y="5" width="35" height="31" rx="4" fill="#1c4e80"/><rect x="10" y="12" width="7" height="7" fill="#e8502a"/><rect x="18" y="12" width="7" height="7" fill="#7cb82a"/><rect x="10" y="20" width="7" height="7" fill="#1f9be0"/><rect x="18" y="20" width="7" height="7" fill="#f4b81a"/></svg>
        <svg class="tb-meet" width="35" height="26" viewBox="0 0 35 26"><path d="M0 0h18l5 8v10l-5 8H0z" fill="#6a6a6a"/><circle cx="23" cy="13" r="3.500" fill="#555"/><circle cx="32" cy="13" r="3" fill="#555"/></svg>
        <svg class="tb-thumb" width="36" height="36" viewBox="0 0 36 36"><rect width="36" height="36" fill="#0f7ad1"/><circle cx="17" cy="19" r="13" fill="none" stroke="#fff" stroke-width="2"/><path d="M9 18l4 11h9l4-9-7-1 5-11-4-1-7 10z" fill="#fff"/><path d="M26 4l1 4M30 6l-2 4M33 10l-4 2" stroke="#fff"/></svg>
        <svg class="tb-gauge" width="36" height="36" viewBox="0 0 36 36"><rect width="36" height="36" fill="#0f7ad1"/><circle cx="18" cy="19" r="13" fill="#fff"/><circle cx="18" cy="19" r="7" fill="#0f7ad1"/><path d="M15 21 26 6l-6 19z" fill="#fff"/><circle cx="18" cy="4" r="1.500" fill="#fff"/><circle cx="3" cy="17" r="1.500" fill="#fff"/><circle cx="33" cy="20" r="1.500" fill="#fff"/></svg>
        <div class="tb-slot tb-explorer">
            <svg width="36" height="36" viewBox="0 0 36 36"><path d="M0 2h14l3 4h19v30H0z" fill="#f4c542"/><path d="M0 8h36v28H0z" fill="#ffdc6b"/><rect x="11" y="23" width="22" height="13" rx="2" fill="#1878c8"/><rect x="15" y="26" width="12" height="2" fill="#0e4f8a"/></svg>
            <i></i>
        </div>
        <div class="tb-slot tb-chrome1">
            <svg width="36" height="36"><use href="#chrome"/><circle cx="27" cy="12" r="9" fill="#c2185b"/><text x="23.500" y="16" class="c-label">C</text></svg>
        </div>
        <div class="tb-slot tb-chrome2">
            <svg width="44" height="44" viewBox="0 0 44 44"><use href="#chrome" x="0" y="8" width="36" height="36"/><circle cx="32" cy="12" r="11" fill="#a8bfe0" stroke="#8a8a8a"/><circle cx="32" cy="12" r="6" fill="#6a9ad8" stroke="#fff" stroke-width="1.500"/></svg>
            <i></i>
        </div>
        <div class="tb-active">
            <svg width="32" height="36" viewBox="0 0 32 36"><path d="M16 0 32 8v20l-16 8L0 28V8z" fill="#0f6cd0"/><circle cx="16" cy="18" r="10" fill="#fff"/><path d="M17 9c-4 1-6 5-4 8l-3 3 4 6 3-5c3-1 3-4 1-6l3-3z" fill="#0f6cd0"/></svg>
            <i></i>
        </div>
        <svg class="tb-up" width="16" height="10" viewBox="0 0 16 10"><path d="M1 9l7-7 7 7" fill="none" stroke="#222" stroke-width="1.800"/></svg>
        <div class="tb-slack">
            <svg width="24" height="24" viewBox="0 0 24 24"><g fill="none" stroke="#555" stroke-width="1.200"><rect x="1" y="9" width="10" height="3" rx="1.500"/><rect x="13" y="12" width="10" height="3" rx="1.500"/><rect x="9" y="1" width="3" height="10" rx="1.500"/><rect x="12" y="13" width="3" height="10" rx="1.500"/><circle cx="5" cy="16" r="2.500"/><circle cx="19" cy="8" r="2.500"/><circle cx="16" cy="4" r="2.500"/><circle cx="8" cy="20" r="2.500"/></g></svg>
        </div>
        <span class="tb-ime">A</span>
        <svg class="tb-wifi" width="24" height="20" viewBox="0 0 24 20"><path d="M1 7c6-6 16-6 22 0M5 11c4-4 10-4 14 0M8.500 14.500c2-2 5-2 7 0" fill="none" stroke="#222" stroke-width="1.800"/><circle cx="12" cy="18" r="1.800" fill="#222"/></svg>
        <svg class="tb-mute" width="24" height="22" viewBox="0 0 24 22"><path d="M1 8v6h4l6 6V2L5 8z" fill="none" stroke="#222" stroke-width="1.500"/><path d="M16 8l6 6M22 8l-6 6" stroke="#222" stroke-width="1.500"/></svg>
        <svg class="tb-battery" width="24" height="16" viewBox="0 0 24 16"><rect x="1" y="1" width="20" height="14" rx="3" fill="none" stroke="#222" stroke-width="1.500"/><rect x="4" y="4" width="10" height="8" fill="#222"/><rect x="22" y="5" width="2" height="6" fill="#222"/></svg>
        <div class="tb-clock"><span>14:22</span><span>2025/04/22</span></div>
        <svg class="tb-dnd" width="24" height="28" viewBox="0 0 24 28"><path d="M2 20c2-2 2-4 2-9a7 7 0 0 1 11-4M16 10c1 5 2 8 3 10z" fill="#222" stroke="#222" stroke-width="1.500"/><path d="M2 20h17v1.500H2z" fill="#222"/><circle cx="10" cy="25" r="2.400" fill="#222"/><text x="7" y="16" class="z-big">Z</text><text x="16" y="8" class="z-small">Z</text></svg>
    </footer>
</body>
</html>
```

FILE: styles.css
```css
* {
    margin: 0;
    padding: 0;
    box-sizing: border-box;
}

html, body {
    width: 1920px;
    height: 1080px;
    overflow: hidden;
}

body {
    background: #eff0f2;
    color: #444;
    font-family: "Open Sans", "Noto Sans CJK JP", sans-serif;
    font-feature-settings: "palt";
    font-size: 16px;
    line-height: 1.2;
}

svg {
    display: block;
    flex: none;
    color: #444;
}

.sprite {
    position: absolute;
    width: 0;
    height: 0;
}

/* katakana runs sit tighter than the Noto glyphs */
.kn {
    letter-spacing: -.1em;
}

.window {
    height: 1008px;
    display: flex;
    flex-direction: column;
}

/* title bar */
.titlebar {
    height: 50px;
    display: flex;
    align-items: center;
    flex: none;
}

.quick {
    display: flex;
    align-items: center;
    margin-left: 15px;
}

.q-open { margin-left: 23px; }
.q-save { margin-left: 22px; }
.q-undo { margin-left: 19px; }
.q-chev { margin-left: 13px; }
.q-redo { margin-left: 24px; }
.q-custom { margin-left: 32px; }

.project-name {
    margin-left: 46px;
    margin-top: 2px;
    font-size: 17.8px;
}

.q-name-chev { margin-left: 6px; }

.command {
    width: 268px;
    height: 35px;
    margin-left: 243px;
    padding-left: 9px;
    display: flex;
    align-items: center;
    background: #f7f8f8;
    border: 2px solid #9c9c9c;
    border-radius: 4px;
}

.command-text {
    margin-left: 12px;
    margin-top: 2px;
    font-size: 16px;
    font-style: italic;
    color: #8a8a8a;
}

.command-mag { margin-left: auto; margin-right: 10px; color: #555; }

.app-title {
    margin-left: 78px;
    margin-top: 2px;
    width: 491px;
    white-space: nowrap;
    font-size: 17.4px;
    color: #444;
}

.avatar {
    width: 35px;
    height: 36px;
    margin-left: 13px;
    display: flex;
    align-items: center;
    justify-content: center;
    border-radius: 50%;
    background: #cdcdee;
    color: #1c1464;
    font-size: 13px;
    font-weight: 700;
}

.win-bell { margin-left: 25px; }

.help {
    margin-left: 44px;
    font-size: 19px;
    color: #555;
}

.win-min { margin-left: 54px; }
.win-max { margin-left: 51px; }
.win-close { margin-left: 50px; }

/* ribbon */
.ribbon {
    height: 55px;
    flex: none;
    padding: 2px 0 0 28px;
    display: flex;
    align-items: flex-start;
    gap: 33px;
    font-size: 19px;
    color: #1a1a1a;
    white-space: nowrap;
}

.ribbon > span {
    height: 44px;
    display: flex;
    align-items: center;
}

.ribbon .kn { letter-spacing: -.14em; }

.context-tabs {
    width: 340px;
    height: 42px;
    margin-left: 21px;
    padding-left: 15px;
    display: flex;
    align-items: center;
    background: #fff;
    border: 2px solid #d4d4d8;
    border-radius: 6px;
}

.context-tabs span { margin-top: 2px; }
.context-tabs .ct1 { width: 129px; letter-spacing: -.15em; word-spacing: .3em; }
.context-tabs .ct2 { width: 77px; margin-left: 29px; letter-spacing: -.17em; }
.context-tabs .ct3 { width: 43px; margin-left: 29px; letter-spacing: -.17em; }

/* panels */
.workspace {
    flex: 1;
    display: flex;
    align-items: stretch;
    min-height: 0;
}

.panel {
    background: #f9f9f9;
    border: 1px solid #dcdcdc;
    border-bottom: 0;
    border-radius: 4px 4px 0 0;
}

.contents {
    width: 260px;
    margin-left: 10px;
    margin-top: 1px;
}

.catalog {
    width: 219px;
    margin-left: 10px;
    margin-top: 1px;
}

.panel-head {
    height: 44px;
    display: flex;
    align-items: center;
    padding-left: 9px;
}

.panel-title {
    font-size: 21px;
    letter-spacing: -1.7px;
    color: #1a1a1a;
}

.catalog .panel-title { letter-spacing: -1.2px; }

.ph-chev { margin-left: auto; }
.ph-pin { margin-left: 15px; }
.ph-x { margin-left: 13px; margin-right: 12px; }

.filter-row {
    display: flex;
    align-items: center;
    margin-top: 2px;
    padding-left: 7px;
}

.search-box {
    width: 216px;
    height: 36px;
    margin-left: 12px;
    padding-left: 8px;
    display: flex;
    align-items: center;
    background: #fff;
    border: 2px solid #8f8f8f;
}

.search-text {
    font-size: 17px;
    font-style: italic;
    color: #808080;
}

.sb-mag { margin-left: auto; margin-right: 2px; color: #555; }
.sb-chev { margin-left: 16px; margin-right: 8px; color: #666; }

.view-icons {
    display: flex;
    align-items: center;
    height: 33px;
    margin-top: 16px;
    padding-left: 29px;
    gap: 15px;
}

.vi-pencil { margin-left: 4px; margin-top: 10px; }
.vi-dots { margin-left: 3px; margin-top: 10px; }

.view-tabs {
    width: 168px;
    height: 2px;
    margin: 11px 0 0 23px;
    background: #d4d4d4;
}

.view-tabs-on {
    width: 48px;
    height: 4px;
    position: relative;
    top: -2px;
    background: #0a78c2;
}

.drawing-order {
    margin: 19px 0 0 22px;
    height: 30px;
    font-size: 21px;
    line-height: 30px;
    font-weight: 700;
    color: #444;
}

.toc-row {
    height: 37px;
    display: flex;
    align-items: center;
    font-size: 16.5px;
}

.drawing-order + .toc-row { margin-top: 8px; }

.toc-tri { margin-left: 4px; }
.toc-map { margin-left: 6px; }
.toc-row > span { margin-left: 9px; letter-spacing: -.8px; }

.layer-tri { margin-left: 21px; }

.layer-box {
    width: 223px;
    height: 37px;
    margin-left: 3px;
    padding-left: 2px;
    display: flex;
    align-items: center;
    background: #c5dbee;
    border: 1px solid #1a72b5;
    font-size: 17px;
}

.check {
    width: 19px;
    height: 20px;
    margin-right: 7px;
    display: flex;
    align-items: center;
    justify-content: center;
    background: #fff;
    border: 1px solid #999;
    border-radius: 3px;
}

.layer-symbol {
    width: 30px;
    height: 24px;
    margin: 4px 0 0 42px;
    background: #bfffcf;
    border: 2px solid #9b9b9b;
}

/* centre column */
.center {
    width: 1402px;
    margin-left: 10px;
    display: flex;
    flex-direction: column;
}

.doc-tabs {
    height: 37px;
    flex: none;
    display: flex;
    align-items: flex-start;
    border-bottom: 4px solid #0060a8;
    font-size: 17px;
}

.doc-tab {
    height: 33px;
    display: flex;
    align-items: center;
    padding-left: 8px;
    gap: 9px;
    white-space: nowrap;
}

.doc-tab span { margin-top: 3px; }

.tab-popu { margin-left: 40px; }

.tab-active {
    width: 130px;
    margin-left: 40px;
    padding-left: 10px;
    gap: 5px;
    background: #0060a8;
    border-radius: 5px 5px 0 0;
    color: #fff;
}

.tab-active .tab-x { margin-left: 14px; color: #dcebf6; }

.tabs-chev { margin-left: auto; margin-right: 7px; margin-top: 15px; color: #777; }

.map-view {
    height: 403px;
    flex: none;
    background: #fff;
}

.map-svg {
    width: 100%;
    height: 100%;
}

.land {
    fill: #bffdcf;
    stroke: #777;
    stroke-width: 1.4;
    vector-effect: non-scaling-stroke;
    stroke-linejoin: round;
}

.borders {
    fill: none;
    stroke: #777;
    stroke-width: 1.2;
    vector-effect: non-scaling-stroke;
    stroke-linejoin: round;
}

.selected {
    fill: #27e6e6;
    stroke: #2fd6dc;
    stroke-width: 2;
    vector-effect: non-scaling-stroke;
}

.selected-lines {
    fill: none;
    stroke: #3cc4c8;
    stroke-width: 1;
    vector-effect: non-scaling-stroke;
}

.map-status {
    height: 36px;
    flex: none;
    display: flex;
    align-items: center;
    background: #f7f8f8;
    border-bottom: 1px solid #d4d4d4;
}

.scale-box {
    width: 148px;
    height: 33px;
    margin-left: 10px;
    padding: 0 6px 0 8px;
    display: flex;
    align-items: center;
    justify-content: space-between;
    background: #fff;
    border: 2px solid #b8b8b8;
    font-size: 17px;
    color: #222;
}

.scale-box span { margin-top: 2px; }

.ms-sep {
    width: 2px;
    height: 26px;
    margin-left: 7px;
    background: #b4b4b4;
}

.ms-i1 { margin-left: 8px; margin-top: -4px; }
.ms-i2 { margin-left: 8px; margin-top: -4px; }
.ms-i3 { margin-left: 10px; }
.ms-i4 { margin-left: 7px; margin-top: -4px; }
.ms-i5 { margin-left: 7px; margin-top: -4px; }
.ms-chev { margin-left: 10px; color: #222; }
.ms-sep2 { margin-left: 11px; }

.coords {
    margin-left: 252px;
    margin-top: 4px;
    width: 210px;
    white-space: nowrap;
    font-size: 17.2px;
}

.coords-chev { margin-left: 14px; color: #555; }
.ms-sep3 { margin-left: 252px; }

.selected-count {
    width: 156px;
    height: 32px;
    margin-left: 5px;
    padding-left: 6px;
    display: flex;
    align-items: center;
    gap: 6px;
    background: #fff;
    font-size: 16px;
    white-space: nowrap;
}

.ms-sep4 { margin-left: 5px; }
.ms-i6 { margin-left: 15px; }
.ms-sep5 { margin-left: 13px; }
.ms-pause { margin-left: 11px; }
.ms-sep6 { margin-left: 12px; }
.ms-refresh { margin-left: 10px; }

.table-tabs {
    height: 47px;
    flex: none;
    display: flex;
    align-items: flex-end;
    border-bottom: 4px solid #d4d5d7;
    font-size: 17px;
}

.table-tab {
    width: 162px;
    height: 33px;
    padding-left: 8px;
    display: flex;
    align-items: center;
    gap: 9px;
    background: #dcdee0;
    border-radius: 5px 5px 0 0;
    white-space: nowrap;
}

.table-tab span { margin-top: 3px; }
.table-tab .tab-x { margin-left: 3px; color: #666; }
.table-tabs .tabs-chev { margin-bottom: 10px; }

.table-tools {
    height: 44px;
    margin: 4px 2px 0 3px;
    flex: none;
    padding-left: 6px;
    display: flex;
    align-items: center;
    background: #f0f1f2;
    border: 2px solid #d0d0d0;
    font-size: 17.5px;
    white-space: nowrap;
}

.table-tools b {
    font-weight: 700;
    font-size: 16.5px;
}

.table-tools .kn { letter-spacing: -.17em; }
.table-tools b.kn { letter-spacing: -.11em; }
.table-tools svg + span { margin-left: 5.5px; }
.table-tools .tt-add { margin-left: 8px; }
.table-tools .tt-zoom { margin-left: 3px; }
.table-tools .tt-switch { letter-spacing: -.8px; }
.table-tools .tt-copy { letter-spacing: -.22em; }
.tt-i1 { margin-left: 12px; }
.tt-i2 { margin-left: 16px; }

.tt-sep {
    width: 2px;
    height: 32px;
    margin: 0 12px 0 17px;
    background: #d0d0d0;
}

.tt-i3 { margin-left: 10px; }
.tt-i4 { margin-left: 15px; }
.tt-i5 { margin-left: 14px; }
.tt-i6 { margin-left: 14px; }
.tt-i7 { margin-left: 18px; }
.tt-i8 { margin-left: 16px; }

.hamburger {
    width: 21px;
    margin-left: auto;
    margin-right: 10px;
    display: flex;
    flex-direction: column;
    gap: 3px;
}

.hamburger i {
    height: 3px;
    background: #555;
    border-radius: 2px;
}

.table-area {
    position: relative;
    flex: 1;
    margin: 3px 1px 0 1px;
    padding-top: 2px;
    background: #ebebeb;
    border-top: 1px solid #d8d8d8;
}

.grid-row {
    display: flex;
    height: 320px;
}

.grid-clip {
    width: 1369px;
    margin-left: 3px;
    overflow: hidden;
}

.attr {
    width: 1415px;
    table-layout: fixed;
    border-collapse: separate;
    border-spacing: 0;
    font-size: 16px;
    letter-spacing: -.25px;
    color: #4a4a4a;
}

.c-rh { width: 34px; }
.c-fid { width: 40px; }
.c-shape { width: 66px; }
.c-key { width: 156px; }
.c-pref { width: 51px; }
.c-city { width: 49px; }
.c-sarea { width: 75px; }
.c-pname { width: 166.5px; }
.c-cname { width: 211.5px; }
.c-sname { width: 202px; }
.c-kigo { width: 70px; }
.c-hcode { width: 72px; }
.c-area { width: 117px; }
.c-perim { width: 105px; }

.attr th, .attr td {
    height: 35.5px;
    padding: 0 6px;
    text-align: left;
    white-space: nowrap;
    overflow: hidden;
    border-right: 2px solid #c9c9c9;
    border-bottom: 2px solid #c9c9c9;
}

.attr thead th {
    height: 36px;
    background: #ebebeb;
    font-size: 16.5px;
    font-weight: 700;
    color: #444;
    border-right-width: 1px;
    border-bottom: 2px solid #c9c9c9;
}

.attr thead .corner {
    padding: 12px 0 0 10px;
    background: #fff;
}

.attr thead .fid-head {
    background: #c9e2f5;
    border-bottom: 3px solid #0a78c2;
}

.attr td:nth-child(2) { padding-left: 5px; }
.attr .num { text-align: right; padding-right: 8px; }
.attr .shape { letter-spacing: -1.200px; }

.attr tbody .rh {
    font-weight: 400;
    padding-left: 8px;
    background: #ebebeb;
}

.attr tbody .rh-on {
    background: #c9e2f5;
    border-right: 3px solid #0a62ab;
}

.attr tbody tr td { background: #fff; }
.attr tbody tr.sel td { background: #8cffff; }
.attr tbody tr.sel td.fid-on { background: #c9e2f5; }
.attr tbody tr.alt td { background: #e9e9e9; }

.v-scroll {
    width: 26px;
    position: relative;
}

.vs-up { margin: 12px 0 0 7px; }

.vs-thumb {
    width: 14px;
    height: 32px;
    margin: 9px 0 0 6px;
    border-radius: 7px;
    background: #b5b5b5;
}

.h-scroll {
    width: 410px;
    height: 4px;
    margin: 3px 0 0 31px;
    background: #b0b0b0;
    border-radius: 4px 4px 0 0;
}

.toast {
    position: absolute;
    top: 263px;
    left: 1173px;
    width: 214px;
    height: 46px;
    display: flex;
    align-items: center;
    justify-content: center;
    background: #f5f5f5;
    border-radius: 5px;
    box-shadow: 0 3px 9px rgba(0, 0, 0, .25);
    font-size: 16.5px;
    letter-spacing: -1.100px;
    color: #222;
    white-space: nowrap;
}

/* catalog */
.cat-tabs {
    height: 37px;
    display: flex;
    align-items: center;
    padding-left: 10px;
    font-size: 17px;
}

.cat-tab-on {
    height: 37px;
    line-height: 36px;
    font-weight: 700;
    letter-spacing: -.9px;
    color: #333;
    border-bottom: 3px solid #0a78c2;
}

.cat-tab-off {
    width: 52px;
    margin-left: 15px;
    overflow: hidden;
    white-space: nowrap;
    letter-spacing: -.9px;
    color: #333;
}

.cat-dots { margin-left: 23px; }

.cat-tools {
    height: 35px;
    margin-top: 13px;
    padding-left: 7px;
    display: flex;
    align-items: center;
}

.cat-btn {
    width: 35px;
    height: 35px;
    display: flex;
    align-items: center;
    justify-content: center;
}

.cat-home {
    margin-left: 7px;
    border: 2px solid #c9c9c9;
    background: #f8f8f8;
}

.cat-filter {
    border: 2px solid #999;
    background: #fff;
}

.cat-search {
    width: 98px;
    height: 35px;
    padding-left: 9px;
    display: flex;
    align-items: center;
    background: #fff;
    border: 2px solid #999;
    border-left: 0;
}

.cat-search span {
    width: 24px;
    overflow: hidden;
    white-space: nowrap;
    font-size: 16px;
    font-style: italic;
    color: #555;
}

.cs-mag { margin-left: 9px; color: #555; }
.cs-chev { margin-left: 11px; color: #666; }

.cat-tree {
    margin-top: 11px;
    font-size: 17px;
}

.cat-tree .kn { letter-spacing: -.11em; }

.cat-row {
    height: 37px;
    display: flex;
    align-items: center;
    white-space: nowrap;
    position: relative;
}

.cat-row > span { margin-left: 11px; }

.lvl0 { padding-left: 21px; }
.lvl1 { padding-left: 46px; }
.lvl2 { padding-left: 70px; }
.lvl0.open { padding-left: 19px; }
.lvl1.open { padding-left: 44px; }
.lvl2.open { padding-left: 68px; }

.fold { margin-left: 11px; }
.lvl0.open .fold, .lvl1.open .fold, .lvl2.open .fold { margin-left: 12px; }
.fold-home { margin-right: -4px; margin-top: 6px; }

.no-tri { padding-left: 91px; }

.cat-selected {
    width: 104px;
    height: 35px;
    margin: 1px 0 1px 105px;
    padding-left: 5px;
    background: #c8c8c8;
    border: 2px solid #8f8f8f;
}

.pdf-label {
    font-size: 8px;
    font-weight: 700;
    fill: #1c6fb0;
    font-family: "Liberation Sans", sans-serif;
}

/* taskbar */
.taskbar {
    height: 72px;
    display: flex;
    align-items: center;
    background: #eef1f5;
    border-top: 2px solid #c9c9c9;
}

.tb-weather {
    position: relative;
    margin-left: 34px;
    margin-top: 8px;
}

.tb-badge {
    position: absolute;
    top: -15px;
    left: 12px;
    width: 24px;
    height: 28px;
    border-radius: 50%;
    background: #c42b1c;
    color: #fff;
    font-size: 16px;
    font-weight: 700;
    display: flex;
    align-items: center;
    justify-content: center;
}

.tb-win { margin-left: 221px; }

.tb-search {
    width: 328px;
    height: 46px;
    margin-left: 21px;
    padding-left: 16px;
    display: flex;
    align-items: center;
    background: #fbfcfd;
    border: 2px solid #dcdfe3;
    border-radius: 23px;
    font-size: 19px;
    color: #666;
}

.tb-search span { margin-left: 14px; }
.tb-globe { margin-left: auto; margin-right: 7px; }

.tb-taskview { margin-left: 19px; }
.tb-edge { margin-left: 30px; }
.tb-copilot { margin-left: 29px; }
.tb-store { margin-left: 31px; }
.tb-meet { margin-left: 32px; }
.tb-thumb { margin-left: 30px; }
.tb-gauge { margin-left: 30px; }

.tb-slot {
    position: relative;
}

.tb-slot i {
    position: absolute;
    left: 14px;
    top: 41px;
    width: 7px;
    height: 7px;
    border-radius: 50%;
    background: #777;
}

.tb-explorer { margin-left: 30px; }
.tb-chrome1 { margin-left: 30px; }
.tb-chrome2 { margin-left: 30px; margin-top: -8px; }
.tb-chrome2 i { top: 49px; left: 15px; }

.tb-active {
    width: 56px;
    height: 56px;
    margin-left: 12px;
    position: relative;
    display: flex;
    justify-content: center;
    padding-top: 9px;
    background: #fbfcfd;
    border-radius: 5px;
    box-shadow: 0 1px 2px rgba(0, 0, 0, .12);
}

.tb-active i {
    position: absolute;
    left: 17px;
    bottom: 0;
    width: 23px;
    height: 5px;
    border-radius: 3px;
    background: #0f6cd0;
}

.tb-up { margin-left: 107px; }

.tb-slack {
    width: 44px;
    height: 56px;
    margin-left: 18px;
    display: flex;
    align-items: center;
    justify-content: center;
    background: #f6f7f9;
    border-radius: 5px;
    box-shadow: 0 1px 2px rgba(0, 0, 0, .1);
}

.tb-ime {
    margin-left: 16px;
    width: 20px;
    text-align: center;
    font-size: 30px;
    font-weight: 300;
    color: #222;
    font-family: "Roboto", sans-serif;
    transform: scaleX(.8);
}

.tb-wifi { margin-left: 26px; }
.tb-mute { margin-left: 11px; }
.tb-battery { margin-left: 13px; }

.tb-clock {
    width: 100px;
    margin-left: 17px;
    display: flex;
    flex-direction: column;
    align-items: flex-end;
    gap: 3px;
    font-size: 17.5px;
    color: #222;
    white-space: nowrap;
}

.tb-dnd { margin-left: 12px; }

.c-label {
    font-size: 10px;
    font-weight: 700;
    fill: #fff;
    font-family: "Liberation Sans", sans-serif;
}

.z-big, .z-small {
    font-family: "Liberation Sans", sans-serif;
    font-weight: 700;
    fill: #fff;
    stroke: none;
}

.z-big { font-size: 11px; }
.z-small { font-size: 8px; fill: #222; }
```
